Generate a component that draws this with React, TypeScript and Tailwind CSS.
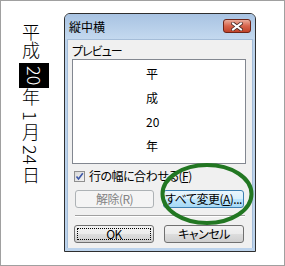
import React from "react";

const FONT = '"Noto Sans CJK JP", "Liberation Sans", sans-serif';

function V({ children, className = "" }: { children: React.ReactNode; className?: string }) {
  return (
    <div className={"ml-[3px] w-[18px] flex justify-center " + className}>
      <span className="[writing-mode:vertical-rl] leading-[18px]">{children}</span>
    </div>
  );
}

function VerticalText() {
  return (
    <div className="w-[30px] mt-[10px] flex flex-col items-start text-[18px] leading-[18px] text-black font-light">
      <V>平</V>
      <V>成</V>
      <div className="mt-[4px] w-[30px] h-[25px] bg-black text-white flex items-center justify-center">
        <span className="[writing-mode:vertical-rl] leading-[18px] pl-[1px]">20</span>
      </div>
      <V>年</V>
      <V className="mt-[5px]">1</V>
      <V className="mt-[2px]">月</V>
      <V className="mt-[4px]">24</V>
      <V className="mt-[2px]">日</V>
    </div>
  );
}

function CloseButton() {
  return (
    <div className="mt-[5px] w-[28px] h-[14px] rounded-[3px] border border-[#6e2417] bg-gradient-to-b from-[#e9ab9b] via-[#d7644b] to-[#c0432a] flex items-center justify-center">
      <svg width="12" height="9" viewBox="0 0 12 9">
        <path d="M2 1.5 L10 7.5 M10 1.5 L2 7.5" stroke="#4a2a24" strokeWidth="3.6" strokeLinecap="square" />
        <path d="M2 1.5 L10 7.5 M10 1.5 L2 7.5" stroke="#ffffff" strokeWidth="2" strokeLinecap="square" />
      </svg>
    </div>
  );
}

function GrayButton({ children, className = "" }: { children: React.ReactNode; className?: string }) {
  return (
    <div
      className={
        "h-[18px] w-[80px] rounded-[3px] border border-[#707070] flex items-center justify-center text-[12px] leading-[12px] text-black bg-[linear-gradient(to_bottom,#f2f2f2_0%,#ebebeb_50%,#dddddd_51%,#cfcfcf_100%)] " +
        className
      }
    >
      {children}
    </div>
  );
}

function Dialog() {
  return (
    <div className="ml-[15px] w-[192px] h-[239px] border border-[#2e2e2e] rounded-t-[6px] bg-[#bcd3ec] flex flex-col overflow-hidden">
      <div className="h-[25px] shrink-0 flex items-start justify-between px-[4px] bg-gradient-to-b from-[#a8c3e2] to-[#c4d9ef]">
        <span className="mt-[6px] text-[12px] leading-[14px] text-black">縦中横</span>
        <CloseButton />
      </div>
      <div className="flex-1 mx-[2px] mb-[3px] border-l border-r border-t border-[#a5bdd8] bg-[#f0f0f0] flex flex-col pl-[4px] tracking-[-0.5px] [font-feature-settings:'palt']">
        <div className="mt-[4px] text-[12px] leading-[14px] text-black tracking-[-1px]">プレビュー</div>
        <div className="mt-[1px] w-[174px] h-[105px] shrink-0 border border-[#828790] bg-white flex flex-col pl-[73px] pt-[2px] text-[12px] leading-[24px] text-black tracking-normal">
          <div>平</div>
          <div>成</div>
          <div>20</div>
          <div>年</div>
        </div>
        <div className="mt-[6px] h-[12px] flex items-center">
          <div className="ml-[2px] w-[11px] h-[11px] border border-[#8f8f8f] bg-gradient-to-br from-[#d8d8d8] to-[#f4f4f4] flex items-center justify-center">
            <svg width="9" height="9" viewBox="0 0 9 9">
              <path d="M1.5 4.5 L3.5 7 L7.8 1.2" stroke="#3c57a8" strokeWidth="1.6" fill="none" />
            </svg>
          </div>
          <span className="ml-[4px] text-[12px] leading-[14px] text-black">
            行の幅に合わせる(<span className="underline">F</span>)
          </span>
        </div>
        <div className="mt-[8px] flex">
          <div className="ml-[3px] h-[18px] w-[79px] rounded-[3px] border border-[#adb2b5] bg-[#f4f4f4] flex items-center justify-center text-[12px] leading-[12px] text-[#838383]">
            解除(R)
          </div>
          <div className="ml-[9px] h-[18px] w-[81px] rounded-[3px] border border-[#3c7fb1] bg-[linear-gradient(to_bottom,#eaf6fd_0%,#d9f0fc_50%,#bee6fd_51%,#a7d9f5_100%)] flex items-center justify-center text-[12px] leading-[12px] text-black whitespace-nowrap">
            すべて変更(<span className="underline">A</span>)...
          </div>
        </div>
        <div className="mt-[7px] ml-[3px] w-[170px] h-[1px] bg-[#a0a0a0]" />
        <div className="ml-[3px] w-[170px] h-[1px] bg-white" />
        <div className="mt-[8px] flex">
          <GrayButton className="ml-[2px] border-[#3c93d8]">
            <div className="w-[74px] h-[12px] border border-dotted border-black flex items-center justify-center">OK</div>
          </GrayButton>
          <GrayButton className="ml-[10px]">キャンセル</GrayButton>
        </div>
      </div>
    </div>
  );
}

export default function App() {
  return (
    <div
      className="relative w-[285px] h-[266px] border border-[#a0a0a0] bg-white overflow-hidden"
      style={{ fontFamily: FONT }}
    >
      <div className="flex items-start pl-[18px] pt-[12px]">
        <VerticalText />
        <Dialog />
      </div>
      <svg className="absolute left-[156px] top-[159px]" width="100" height="68" viewBox="0 0 100 68">
        <ellipse cx="50" cy="34" rx="44.5" ry="29" fill="none" stroke="#227722" strokeWidth="4" />
      </svg>
    </div>
  );
}
